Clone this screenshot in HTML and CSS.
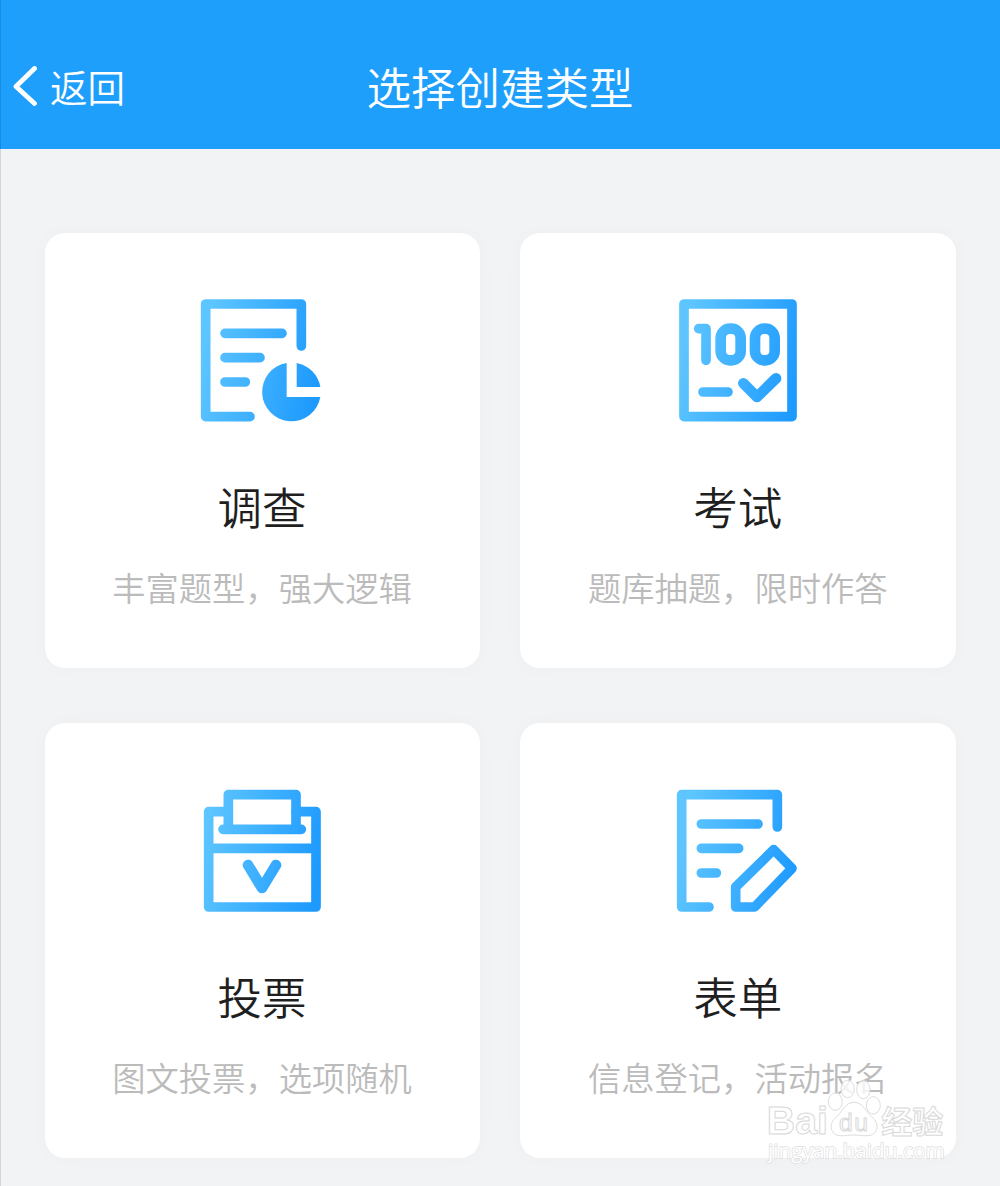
FILE: index.html
```
<!DOCTYPE html>
<html lang="zh-CN">
<head>
    <meta charset="UTF-8">
    <meta name="viewport" content="width=device-width, initial-scale=1.0">
    <title>选择创建类型</title>
    <link rel="stylesheet" href="styles.css">
</head>
<body>
    <header class="navbar">
        <a class="back" href="#">
            <svg class="back-icon" viewBox="0 0 24 40">
                <path d="M21.5 2.5L3 20.5L21.5 37.5"/>
            </svg>
            <span>返回</span>
        </a>
        <h1>选择创建类型</h1>
    </header>

    <main class="type-grid">
        <!-- 调查 -->
        <a class="card" href="#">
            <svg class="icon" viewBox="6 0 480 480">
                <defs>
                    <linearGradient id="blue" gradientUnits="userSpaceOnUse" x1="70" y1="210" x2="420" y2="280">
                        <stop offset="0" stop-color="#5dc5ff"/>
                        <stop offset="1" stop-color="#1d9afe"/>
                    </linearGradient>
                </defs>
                <path class="line" d="M364 198V72H77V410H210M135 160H306M135 233H240M135 306H196"/>
                <path class="solid" d="M320 249A88 88 0 1 0 421 351H320Z"/>
                <path class="solid" d="M350 249A88 88 0 0 1 421 321H350Z"/>
            </svg>
            <h2>调查</h2>
            <p>丰富题型，强大逻辑</p>
        </a>

        <!-- 考试 -->
        <a class="card" href="#">
            <svg class="icon" viewBox="-6 0 480 480">
                <path class="line" d="M72 72H396V410H72Z"/>
                <path class="line" d="M116 146H138V241M129 336H204"/>
                <rect class="line thick" x="182" y="146" width="60" height="95" rx="28"/>
                <rect class="line thick" x="285" y="146" width="59" height="95" rx="28"/>
                <path class="line thick" d="M250 310L291 351L348 295"/>
            </svg>
            <h2>考试</h2>
            <p>题库抽题，限时作答</p>
        </a>

        <!-- 投票 -->
        <a class="card" href="#">
            <svg class="icon" viewBox="6 0 480 480">
                <path class="line" d="M145 125H86V411H408V125H348M86 235H408"/>
                <path class="line" d="M145 178V74H348V178M129 178H364"/>
                <path class="line thick" d="M204 285L246 354L288 285"/>
            </svg>
            <h2>投票</h2>
            <p>图文投票，选项随机</p>
        </a>

        <!-- 表单 -->
        <a class="card" href="#">
            <svg class="icon" viewBox="-6 0 480 480">
                <path class="line" d="M352 171V74H65V411H147M124 162H294M124 235H236M124 309H169"/>
                <path class="line" d="M341 239L396 295L284 411H227V351Z"/>
            </svg>
            <h2>表单</h2>
            <p>信息登记，活动报名</p>
        </a>
    </main>

    <!-- 水印 -->
    <svg class="watermark" viewBox="0 0 750 408">
        <g class="paw">
            <ellipse cx="256" cy="155" rx="21" ry="26"/>
            <ellipse cx="293" cy="117" rx="20" ry="26"/>
            <ellipse cx="340" cy="119" rx="20" ry="27"/>
            <ellipse cx="370" cy="166" rx="21" ry="26"/>
            <path d="M312 157C340 157 348 187 370 205C390 224 382 257 352 257C335 258 326 255 312 255C298 255 288 258 272 257C242 257 234 224 255 205C277 187 284 157 312 157Z"/>
        </g>
        <text class="mark" x="50" y="253" font-size="118" textLength="184">Bai</text>
        <text class="mark du" x="267" y="242" font-size="74" textLength="87">du</text>
        <text class="mark cn" x="394" y="248" font-size="93" textLength="186">经验</text>
        <text class="mark site" x="54" y="325" font-size="58" textLength="530" lengthAdjust="spacingAndGlyphs">jingyan.baidu.com</text>
    </svg>
</body>
</html>
```
FILE: styles.css
```
* {
    box-sizing: border-box;
}
body {
    margin: 0;
    min-height: 1186px;
    font-family: "Noto Sans CJK SC", sans-serif;
    font-weight: 350;
    background-color: #f1f3f5;
    box-shadow: inset 1px 0 0 #d3d6d9;
}
a {
    color: inherit;
    text-decoration: none;
}
.navbar {
    display: grid;
    grid-template-columns: 1fr auto 1fr;
    align-items: center;
    height: 149px;
    padding: 22px 13px 0 13px;
    background-color: #1f9ffc;
    color: #fff;
    box-shadow: inset 1px 0 0 #1b8bdf;
}
.navbar h1 {
    margin: 0;
    font-size: 44.5px;
    font-weight: 350;
    line-height: 60px;
}
.back {
    display: flex;
    align-items: center;
    font-size: 37.5px;
    line-height: 60px;
}
.back-icon {
    width: 24px;
    height: 40px;
    margin-right: 13px;
    fill: none;
    stroke: #fff;
    stroke-width: 4.8;
    stroke-linecap: round;
    stroke-linejoin: round;
}
.type-grid {
    display: grid;
    grid-template-columns: 435px 435.5px;
    gap: 55.8px 40.5px;
    padding: 84px 44px 28px 44.5px;
}
.card {
    display: flex;
    flex-direction: column;
    align-items: center;
    height: 434.7px;
    padding-top: 47px;
    border-radius: 20px;
    background-color: #fff;
    box-shadow: 0 0 20px rgba(0, 0, 0, 0.025);
}
.icon {
    width: 160px;
    height: 160px;
}
.line {
    fill: none;
    stroke: url(#blue);
    stroke-width: 29;
    stroke-linecap: round;
    stroke-linejoin: round;
}
.thick {
    stroke-width: 32;
}
.solid {
    fill: url(#blue);
}
.card h2 {
    margin: 34px 0 0;
    font-size: 44.5px;
    font-weight: 350;
    line-height: 64px;
    color: #1f1f1f;
}
.card p {
    margin: 25px 0 0;
    font-size: 33.3px;
    line-height: 48px;
    color: #bbb;
}
.watermark {
    position: absolute;
    left: 750px;
    top: 1050px;
    width: 250px;
    height: 136px;
}
.paw {
    fill: rgba(255, 255, 255, 0.8);
    stroke: #ddd;
    stroke-width: 3;
}
.mark {
    font-family: "Liberation Sans", sans-serif;
    font-weight: 700;
    fill: #fff;
    stroke: #d8d8d8;
    stroke-width: 3;
}
.cn {
    font-family: "Noto Sans CJK SC", sans-serif;
}
.du {
    font-weight: 400;
}
.site {
    font-family: "Open Sans", sans-serif;
    font-weight: 400;
    stroke: #ddd;
    stroke-width: 4;
    paint-order: stroke;
}
```
